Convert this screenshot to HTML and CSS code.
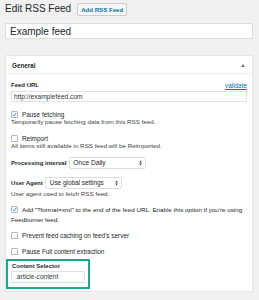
FILE: index.html
```html
<!DOCTYPE html>
<html lang="en">
<head>
  <meta charset="UTF-8">
  <title>Edit RSS Feed</title>
  <link rel="stylesheet" href="styles.css">
</head>
<body>
  <div class="wrap">
    <!-- page title -->
    <div class="page-head">
      <h1>Edit RSS Feed</h1>
      <span class="add-btn">Add RSS Feed</span>
    </div>
    <input class="title-input" type="text" value="Example feed" spellcheck="false">

    <!-- settings box -->
    <div class="postbox">
      <div class="postbox-head">
        <span>General</span>
        <span class="toggle"></span>
      </div>
      <div class="inside">
        <div class="label-row">
          <span class="label">Feed URL</span>
          <a class="validate">validate</a>
        </div>
        <div class="field url-field">http://examplefeed.com</div>

        <div class="check-row row-pause">
          <span class="cb checked"><svg viewBox="0 0 8 8"><path d="M1.3 4.2 L3.1 6 L6.9 1.4" /></svg></span>
          <span>Pause fetching</span>
        </div>
        <p class="desc">Temporarily pause fetching data from this RSS feed.</p>

        <div class="check-row row-reimport">
          <span class="cb"></span>
          <span>Reimport</span>
        </div>
        <p class="desc">All items still available in RSS feed will be Reimported.</p>

        <div class="select-row row-interval">
          <span class="label">Processing interval</span>
          <div class="select interval-select">Once Daily
            <svg class="arrows" viewBox="0 0 4 8"><path d="M0.3 3.2 L2 0.8 L3.7 3.2Z M0.3 4.8 L2 7.2 L3.7 4.8Z" /></svg>
          </div>
        </div>

        <div class="select-row row-agent">
          <span class="label">User Agent</span>
          <div class="select agent-select">Use global settings
            <svg class="arrows" viewBox="0 0 4 8"><path d="M0.3 3.2 L2 0.8 L3.7 3.2Z M0.3 4.8 L2 7.2 L3.7 4.8Z" /></svg>
          </div>
        </div>
        <p class="desc desc-agent">User agent used to fetch RSS feed.</p>

        <p class="inline-check"><span class="cb checked"><svg viewBox="0 0 8 8"><path d="M1.3 4.2 L3.1 6 L6.9 1.4" /></svg></span>Add "?format=xml" to the end of the feed URL. Enable this option if you're using Feedburner feed.</p>

        <div class="check-row row-cache">
          <span class="cb"></span>
          <span>Prevent feed caching on feed's server</span>
        </div>

        <div class="check-row row-full">
          <span class="cb"></span>
          <span>Pause Full content extraction</span>
        </div>

        <!-- highlighted field -->
        <div class="highlight">
          <span class="label">Content Selector</span>
          <div class="field selector-field">.article-content</div>
        </div>
      </div>
    </div>
  </div>
</body>
</html>
```

FILE: styles.css
```css
* { margin: 0; padding: 0; box-sizing: border-box; }
body {
  font-family: "Liberation Sans", Arial, sans-serif;
  background: #f1f1f1;
  color: #23282d;
}
.wrap {
  padding: 3px 6px 0 5px;
}
/* page title row */
.page-head {
  display: flex;
  align-items: center;
  gap: 6px;
  height: 12px;
}
.page-head h1 {
  font-size: 10px;
  font-weight: 400;
  line-height: 12px;
}
.add-btn {
  font-size: 6.1px;
  font-weight: 700;
  color: #0073aa;
  background: #f7f7f7;
  border: 1px solid #ccc;
  border-radius: 2px;
  padding: 2px 3px;
  line-height: 7px;
  margin-top: 1px;
}
.title-input {
  display: block;
  width: 100%;
  height: 16px;
  margin-top: 8px;
  border: 1px solid #ddd;
  background: #fff;
  font-family: inherit;
  font-size: 10px;
  color: #23282d;
  padding: 0 4px;
  outline: none;
  box-shadow: none;
}
/* settings box */
.postbox {
  margin-top: 16px;
  background: #fff;
  border: 1px solid #e5e5e5;
}
.postbox-head {
  display: flex;
  align-items: center;
  justify-content: space-between;
  height: 18px;
  padding: 2px 7px 0 6px;
  border-bottom: 1px solid #eee;
  font-size: 6.3px;
  font-weight: 700;
}
.toggle {
  width: 0;
  height: 0;
  border-left: 2px solid transparent;
  border-right: 2px solid transparent;
  border-bottom: 3px solid #72777c;
}
.inside {
  padding: 7px 5px 2px 5px;
}
.label {
  font-size: 6px;
  font-weight: 700;
  line-height: 8px;
  white-space: nowrap;
}
.label-row {
  display: flex;
  justify-content: space-between;
  align-items: center;
  height: 8px;
}
.validate {
  font-size: 6.4px;
  color: #0073aa;
  text-decoration: underline;
}
.field {
  height: 11px;
  border: 1px solid #e2e2e2;
  background: #fff;
  font-size: 6.6px;
  line-height: 9px;
  color: #32373c;
  padding: 0 2px;
  white-space: nowrap;
}
.url-field {
  margin-top: 2px;
}
/* checkboxes */
.check-row {
  display: flex;
  align-items: center;
  gap: 4px;
  height: 8px;
  font-size: 6.4px;
}
.cb {
  display: inline-flex;
  width: 7px;
  height: 7px;
  border: 1px solid #b4b9be;
  border-radius: 1px;
  background: #fff;
  flex-shrink: 0;
}
.cb svg {
  width: 7px;
  height: 7px;
  margin: -1px 0 0 0;
}
.cb path {
  fill: none;
  stroke: #1e8cbe;
  stroke-width: 1.6;
}
.row-pause { margin-top: 8px; }
.row-reimport { margin-top: 8px; }
.row-cache { margin-top: 6px; }
.row-full { margin-top: 8px; }
.desc {
  font-size: 6.25px;
  line-height: 8px;
  color: #444;
}
/* select rows */
.select-row {
  display: flex;
  align-items: center;
  gap: 2px;
}
.row-interval { margin-top: 7px; }
.row-agent { margin-top: 8px; }
.select {
  position: relative;
  height: 12px;
  border: 1px solid #ddd;
  border-radius: 2px;
  background: #fff;
  font-size: 6.6px;
  line-height: 10px;
  padding-left: 3px;
  white-space: nowrap;
}
.interval-select {
  width: 77px;
  margin-left: 1px;
}
.agent-select {
  width: 77px;
  font-size: 6.4px;
  padding-left: 4px;
}
.arrows {
  position: absolute;
  right: 3px;
  top: 2px;
  width: 3px;
  height: 6px;
}
.arrows path { fill: #32373c; }
.desc-agent { margin-top: 1px; }
.inline-check {
  margin-top: 7px;
  font-size: 6.25px;
  line-height: 10px;
  color: #23282d;
}
.inline-check .cb {
  vertical-align: -1px;
  margin-right: 4px;
}
/* highlighted content selector */
.highlight {
  margin: 4px 0 0 -5px;
  width: 84px;
  border: 2px solid #1fa88a;
  padding: 1px 3px 4px 3px;
}
.highlight .label {
  display: block;
  padding-left: 1px;
}
.selector-field {
  width: 74px;
  height: 12px;
  margin-top: 1px;
  line-height: 10px;
  padding-left: 3px;
}
```
